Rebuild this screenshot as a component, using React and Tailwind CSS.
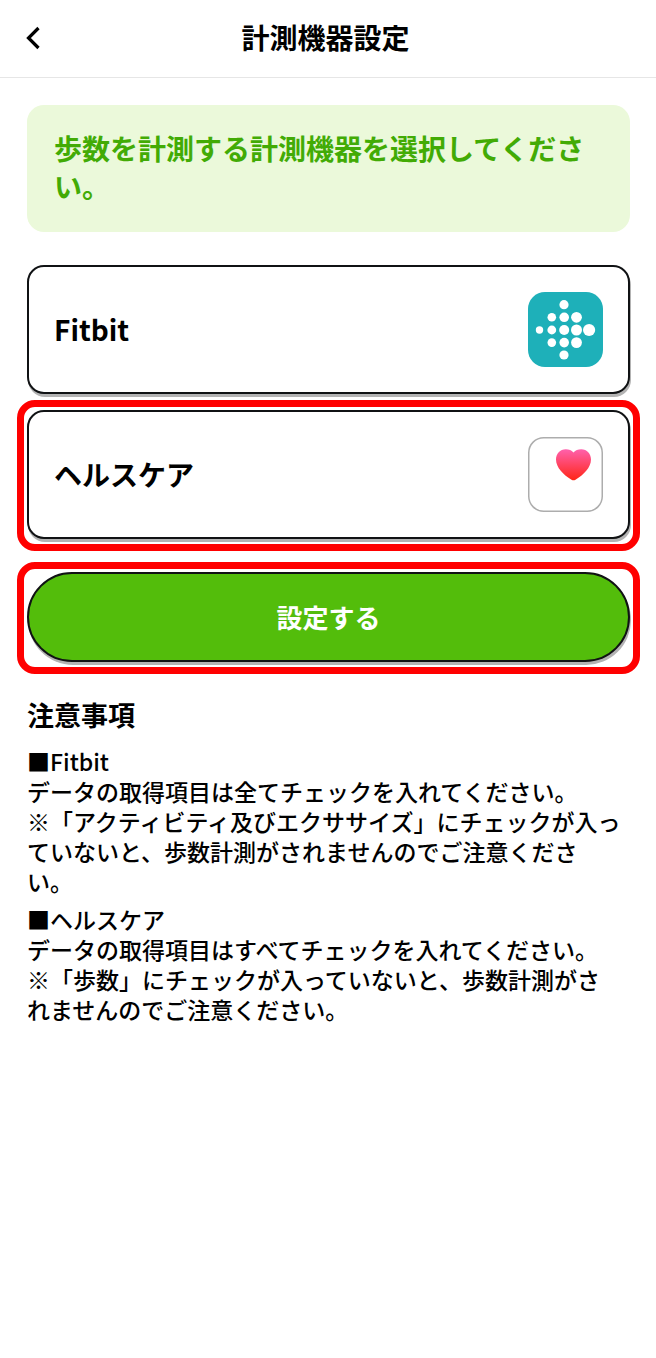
import React from 'react';

const FITBIT_DOTS = [
    [36, 12.7, 4.6],
    [23.8, 25.3, 4.3], [36.2, 25.3, 4.8], [48.5, 25.3, 5.4],
    [11.5, 38, 3.7], [23.8, 38, 4.4], [36.2, 38, 5], [48.5, 38, 5.5], [61.1, 38, 6.1],
    [23.8, 50.6, 4.3], [36.2, 50.6, 4.8], [48.5, 50.6, 5.4],
    [36, 63, 4.6],
];

const FitbitIcon = () => (
    <svg viewBox="0 0 75 75" className="h-[75px] w-[75px]" aria-hidden="true">
        <rect width="75" height="75" rx="17" fill="#1eb0b9" />
        {FITBIT_DOTS.map(([cx, cy, r]) => (
            <circle key={`${cx}-${cy}`} cx={cx} cy={cy} r={r} fill="#fff" />
        ))}
    </svg>
);

const HealthIcon = () => (
    <svg viewBox="0 0 75 75" className="h-[75px] w-[75px]" aria-hidden="true">
        <defs>
            <linearGradient id="heart" x1="0" y1="0" x2="0" y2="1">
                <stop offset="0" stopColor="#ff61ad" />
                <stop offset="1" stopColor="#ff2616" />
            </linearGradient>
        </defs>
        <rect x="0.75" y="0.75" width="73.5" height="73.5" rx="15" fill="#fff" stroke="#adadad" strokeWidth="1.5" />
        <path
            d="M45.5 15.5C43.5 13.2 41 12.2 37.8 12.2C32 12.2 28 16.8 28 22.6C28 30.5 35.5 38.2 43.5 42.8Q45.5 43.9 47.5 42.8C55.5 38.2 63 30.5 63 22.6C63 16.8 59 12.2 53.2 12.2C50 12.2 47.5 13.2 45.5 15.5Z"
            fill="url(#heart)"
        />
    </svg>
);

const DeviceCard = ({ name, icon }) => (
    <button
        type="button"
        className="flex h-[129px] w-full items-center justify-between rounded-[17px] border-2 border-[#101214] bg-white px-[25px] text-left text-[28px] font-bold shadow-[1px_3px_0_#b3b3b3]"
    >
        <span className="pb-[2px]">{name}</span>
        {icon}
    </button>
);

// Red frame around the parts the user has to tap
const Highlight = ({ children }) => (
    <div className="-mx-[10px] rounded-[18px] border-[7px] border-[#ff0000] px-[3px] pt-[3px] pb-[5px]">
        {children}
    </div>
);

const App = () => {
    return (
        <div className="min-h-screen bg-white font-['Noto_Sans_CJK_JP',sans-serif] text-black" lang="ja">
            <header className="grid h-[78px] grid-cols-[40px_1fr_40px] items-center border-b border-[#e6e6e6] pr-[25px] pb-[3px] pl-[20px]">
                <button type="button" aria-label="戻る" className="flex h-10 w-10 items-center">
                    <svg viewBox="0 0 26 26" className="h-[26px] w-[26px]" fill="none" stroke="currentColor" strokeWidth="3.2">
                        <path d="M18.5 4L8.5 14L18.5 24" />
                    </svg>
                </button>
                <h1 className="text-center text-[28px] leading-[38px] font-bold">計測機器設定</h1>
            </header>

            <main className="pt-[27px] pr-[26px] pl-[27px]">
                <p className="rounded-[17px] bg-[#ebf9da] px-[27px] pt-[24px] pb-[27px] text-[28px] leading-[38px] font-bold text-[#42ab05]">
                    歩数を計測する計測機器を選択してください。
                </p>

                <div className="mt-[33px] flex flex-col gap-[6px]">
                    <DeviceCard name="Fitbit" icon={<FitbitIcon />} />
                    <Highlight>
                        <DeviceCard name="ヘルスケア" icon={<HealthIcon />} />
                    </Highlight>
                </div>

                <div className="mt-[11px]">
                    <Highlight>
                        <button
                            type="button"
                            className="h-[90px] w-full rounded-full border-2 border-[#101214] bg-[#53bd0b] pb-[2px] text-[26px] font-bold text-white shadow-[1px_3px_0_#b3b3b3]"
                        >
                            設定する
                        </button>
                    </Highlight>
                </div>

                <section className="mt-[22px]">
                    <h2 className="text-[27px] leading-[38px] font-bold">注意事項</h2>
                    <div className="mt-[12px] flex flex-col gap-[8px] text-[23px] leading-[30px] font-medium">
                        <p>
                            ■Fitbit<br />
                            データの取得項目は全てチェックを入れてください。<br />
                            ※「アクティビティ及びエクササイズ」にチェックが入っ<br />
                            ていないと、歩数計測がされませんのでご注意くださ<br />
                            い。
                        </p>
                        <p>
                            ■ヘルスケア<br />
                            データの取得項目はすべてチェックを入れてください。<br />
                            ※「歩数」にチェックが入っていないと、歩数計測がさ<br />
                            れませんのでご注意ください。
                        </p>
                    </div>
                </section>
            </main>
        </div>
    );
};

export default App;
